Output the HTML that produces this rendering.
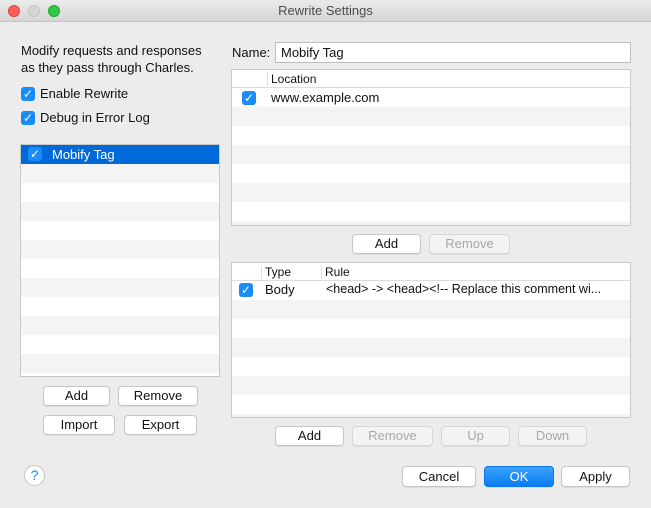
<!DOCTYPE html>
<html><head><meta charset="utf-8"><style>
*{box-sizing:border-box;margin:0;padding:0}
body{width:651px;height:508px;overflow:hidden;background:#ececec;font-family:"Liberation Sans",sans-serif;font-size:13px;color:#111;position:relative}
.a{position:absolute}
.title{left:0;top:0;width:651px;height:22px;background:linear-gradient(#ebebeb,#d6d6d6);border-bottom:1px solid #c4c4c4;text-align:center;line-height:22px;color:#4c4c4c;font-size:13px}
.tl{top:5px;width:12px;height:12px;border-radius:50%}
.cb{width:14px;height:14px;border-radius:3px;background:#1a8cf8;color:#fff;font-size:12px;line-height:14px;text-align:center}
.list{background:repeating-linear-gradient(#fff 0,#fff 19px,#f4f4f4 19px,#f4f4f4 38px);border:1px solid #c8c8c8}
.btn{height:20px;background:#fff;border:1px solid #c6c6c6;border-radius:4px;text-align:center;line-height:18px;box-shadow:0 1px 0 rgba(0,0,0,.06)}
.dis{background:#f3f3f3;color:#a8a8a8;border-color:#d6d6d6}
.hdr{background:#fff;border-bottom:1px solid #dcdcdc;height:18px;font-size:12px;line-height:18px}
.sep{top:3px;width:1px;height:13px;background:#ddd}
</style></head><body>
<div class="a title">Rewrite Settings</div>
<div class="a tl" style="left:8px;background:#fc605c;border:1px solid #e0443e"></div>
<div class="a tl" style="left:28px;background:#d5d5d5;border:1px solid #c4c4c4"></div>
<div class="a tl" style="left:48px;background:#34c84a;border:1px solid #1aab29"></div>

<div class="a" style="left:21px;top:42px;line-height:17px">Modify requests and responses<br>as they pass through Charles.</div>
<div class="a cb" style="left:21px;top:87px">✓</div><div class="a" style="left:40px;top:86px">Enable Rewrite</div>
<div class="a cb" style="left:21px;top:111px">✓</div><div class="a" style="left:40px;top:110px">Debug in Error Log</div>

<div class="a list" style="left:20px;top:144px;width:200px;height:233px"></div>
<div class="a" style="left:21px;top:145px;width:198px;height:19px;background:#0069d9"></div>
<div class="a cb" style="left:28px;top:147px">✓</div>
<div class="a" style="left:52px;top:147px;color:#fff">Mobify Tag</div>

<div class="a btn" style="left:43px;top:386px;width:67px">Add</div>
<div class="a btn" style="left:118px;top:386px;width:80px">Remove</div>
<div class="a btn" style="left:43px;top:415px;width:72px">Import</div>
<div class="a btn" style="left:124px;top:415px;width:73px">Export</div>

<div class="a" style="left:232px;top:45px">Name:</div>
<div class="a" style="left:275px;top:42px;width:356px;height:21px;background:#fff;border:1px solid #bdbdbd;padding-left:5px;line-height:19px">Mobify Tag</div>

<div class="a list" style="left:231px;top:69px;width:400px;height:157px;background-position:0 18px"></div>
<div class="a hdr" style="left:232px;top:70px;width:398px"><span class="a" style="left:39px">Location</span><div class="a sep" style="left:35px"></div></div>
<div class="a cb" style="left:242px;top:91px">✓</div>
<div class="a" style="left:271px;top:90px">www.example.com</div>
<div class="a btn" style="left:352px;top:234px;width:69px">Add</div>
<div class="a btn dis" style="left:429px;top:234px;width:81px">Remove</div>

<div class="a list" style="left:231px;top:262px;width:400px;height:156px;background-position:0 18px"></div>
<div class="a hdr" style="left:232px;top:263px;width:398px"><div class="a sep" style="left:29px"></div><span class="a" style="left:33px">Type</span><div class="a sep" style="left:89px"></div><span class="a" style="left:93px">Rule</span></div>
<div class="a cb" style="left:239px;top:283px">✓</div>
<div class="a" style="left:265px;top:282px">Body</div>
<div class="a" style="left:326px;top:282px;font-size:12.5px">&lt;head&gt; -&gt; &lt;head&gt;&lt;!-- Replace this comment wi...</div>

<div class="a btn" style="left:275px;top:426px;width:69px">Add</div>
<div class="a btn dis" style="left:352px;top:426px;width:81px">Remove</div>
<div class="a btn dis" style="left:441px;top:426px;width:69px">Up</div>
<div class="a btn dis" style="left:518px;top:426px;width:69px">Down</div>

<div class="a" style="left:24px;top:465px;width:21px;height:21px;border-radius:50%;background:#fff;border:1px solid #c4c4c4;color:#1a8cf8;text-align:center;line-height:19px;font-size:14px">?</div>
<div class="a btn" style="left:402px;top:466px;width:74px;height:21px;line-height:19px">Cancel</div>
<div class="a btn" style="left:484px;top:466px;width:70px;height:21px;line-height:19px;background:linear-gradient(#3aa2fd,#0a7cf2);border-color:#0a78e8;color:#fff">OK</div>
<div class="a btn" style="left:561px;top:466px;width:69px;height:21px;line-height:19px">Apply</div>
</body></html>
